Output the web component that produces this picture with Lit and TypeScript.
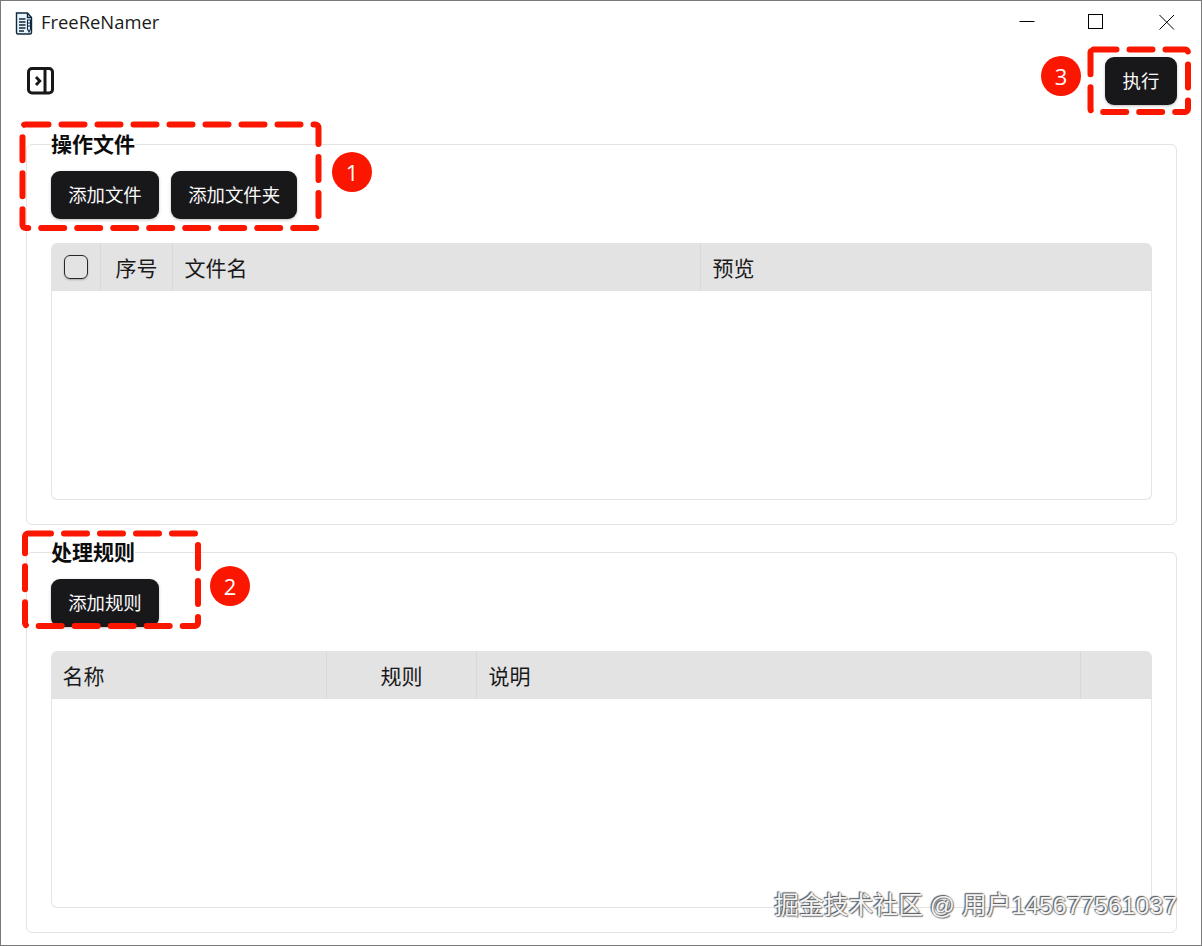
import { LitElement, html, css, svg } from "lit";
import { customElement } from "lit/decorators.js";

@customElement("app-root")
export class AppRoot extends LitElement {
  static styles = css`
    :host {
      display: block;
      position: relative;
      width: 1202px;
      height: 946px;
      box-sizing: border-box;
      border: 1px solid #7a7a7a;
      background: #fff;
      overflow: hidden;
      font-family: "Noto Sans CJK SC", "Noto Sans", sans-serif;
      color: #111;
    }
    .titlebar {
      height: 43px;
      display: flex;
      align-items: center;
      padding-left: 13px;
    }
    .app-name {
      font-family: "Open Sans", "Noto Sans", sans-serif;
      font-size: 18.4px;
      margin-left: 7px;
      color: #1a1a1a;
      position: relative;
      top: -1px;
    }
    .win {
      margin-left: auto;
      display: flex;
      padding-right: 26px;
      gap: 53px;
      position: relative;
      top: -1px;
    }
    .win svg { display: block; width: 16px; height: 16px; }
    .win svg:last-child { margin-left: 2px; }
    .toolbar {
      height: 48px;
      margin-top: 13px;
      display: flex;
      align-items: center;
      justify-content: space-between;
      padding: 0 24px 0 26px;
    }
    .toolbar svg { display: block; }
    .btn {
      height: 48px;
      min-width: 72px;
      box-sizing: border-box;
      padding: 0 17.2px 2px;
      display: inline-flex;
      align-items: center;
      justify-content: center;
      background: #18181b;
      color: #fafafa;
      border-radius: 9px;
      font-size: 18.4px;
      box-shadow: 0 1px 3px rgba(0, 0, 0, 0.25);
    }
    .card {
      margin: 0 24px 0 25px;
      height: 381px;
      box-sizing: border-box;
      border: 1px solid #e4e4e4;
      border-radius: 6px;
      padding: 0 24px;
    }
    .first { margin-top: 39px; }
    .second { margin-top: 27px; }
    .card-title {
      width: fit-content;
      height: 28px;
      line-height: 28px;
      margin-top: -16px;
      font-size: 21px;
      font-weight: 700;
      background: #fff;
      color: #0d0d0d;
    }
    .actions {
      display: flex;
      gap: 12px;
      margin-top: 14px;
    }
    .table {
      margin-top: 24px;
      height: 257px;
      box-sizing: border-box;
      border: 1px solid #e4e4e4;
      border-top: none;
      border-radius: 6px;
      overflow: hidden;
    }
    .head {
      height: 48px;
      display: grid;
      background: #e3e3e3;
      margin: 0 -1px;
      font-size: 21px;
      color: #1a1a1a;
    }
    .files { grid-template-columns: 50px 72px 528px 1fr; }
    .rules { grid-template-columns: 276px 150px 604px 1fr; }
    .cell {
      display: flex;
      align-items: center;
      padding: 0 11.5px;
      min-width: 0;
      border-right: 1px solid #d8d8d8;
    }
    .cell:last-child { border-right: none; }
    .center { justify-content: center; padding: 0; }
    .check {
      width: 24px;
      height: 24px;
      box-sizing: border-box;
      border: 1px solid #27272a;
      border-radius: 6px;
      box-shadow: 0 1px 2px rgba(0, 0, 0, 0.25);
    }
    .overlay {
      position: absolute;
      left: -1px;
      top: -1px;
      width: 1202px;
      height: 946px;
      pointer-events: none;
    }
    .badge {
      position: absolute;
      width: 40px;
      height: 40px;
      border-radius: 50%;
      background: #fb1600;
      color: #fff;
      font-size: 22px;
      font-family: "Open Sans", "Noto Sans", sans-serif;
      display: flex;
      align-items: center;
      justify-content: center;
    }
    .b1 { left: 331px; top: 151px; }
    .b2 { left: 209px; top: 565px; }
    .b3 { left: 1040px; top: 55px; }
    .mark {
      position: absolute;
      right: 24px;
      top: 887px;
      font-size: 24.8px;
      line-height: 36px;
      white-space: nowrap;
      font-family: "Liberation Sans", "Noto Sans CJK SC", sans-serif;
      color: #f4f4f4;
      text-shadow: -1px -1px 1px #555, 1px 1px 1px #777, 0 0 2px #777;
    }
  `;

  private dashed(x: number, y: number, w: number, h: number) {
    return svg`<rect x=${x} y=${y} width=${w} height=${h} rx="3" fill="none" stroke="#fb1600"
      stroke-width="6" stroke-linecap="round" stroke-linejoin="round" stroke-dasharray="23 13"></rect>`;
  }

  render() {
    return html`
      <div class="titlebar">
        <svg width="20" height="24" viewBox="0 0 20 24" fill="none" stroke="#10293f" stroke-width="1.4">
          <path d="M2.5 2 h11 l4 4.5 v15 a1.5 1.5 0 0 1 -1.5 1.5 h-12 a1.5 1.5 0 0 1 -1.5 -1.5 z" fill="#e8f3fa"></path>
          <path d="M13.5 2 v4.5 h4"></path>
          <path d="M5 8h6.5M5 11h6.5M5 14h6.5M5 17h6.5M5 20h5" stroke-width="1.5"></path>
          <path d="M13.5 9h3v9l-1.5 3l-1.5-3z" stroke-width="1.1"></path>
          <path d="M13.5 12h3M13.5 15h3" stroke-width="1"></path>
        </svg>
        <span class="app-name">FreeReNamer</span>
        <div class="win">
          <svg viewBox="0 0 16 16" fill="none" stroke="#000" stroke-width="1"><path d="M0.5 7.5h15"></path></svg>
          <svg viewBox="0 0 16 16" fill="none" stroke="#000" stroke-width="1"><rect x="0.5" y="0.5" width="14" height="14"></rect></svg>
          <svg viewBox="0 0 16 16" fill="none" stroke="#000" stroke-width="1"><path d="M0.5 1l14.5 14.5M15 1l-14.5 14.5"></path></svg>
        </div>
      </div>
      <div class="toolbar">
        <svg width="28" height="28" viewBox="0 0 28 28" fill="none" stroke="#18181b" stroke-width="3">
          <rect x="1.5" y="1.5" width="24" height="24.5" rx="3.5"></rect>
          <path d="M18 1.5v24.5"></path>
          <path d="M9 10l3.8 4l-3.8 4" stroke-width="2.8"></path>
        </svg>
        <div class="btn">执行</div>
      </div>

      <section class="card first">
        <div class="card-title">操作文件</div>
        <div class="actions">
          <div class="btn">添加文件</div>
          <div class="btn">添加文件夹</div>
        </div>
        <div class="table">
          <div class="head files">
            <div class="cell center"><div class="check"></div></div>
            <div class="cell center">序号</div>
            <div class="cell">文件名</div>
            <div class="cell">预览</div>
          </div>
        </div>
      </section>

      <section class="card second">
        <div class="card-title">处理规则</div>
        <div class="actions"><div class="btn">添加规则</div></div>
        <div class="table">
          <div class="head rules">
            <div class="cell">名称</div>
            <div class="cell center">规则</div>
            <div class="cell">说明</div>
            <div class="cell"></div>
          </div>
        </div>
      </section>

      <svg class="overlay" viewBox="0 0 1202 946">
        ${this.dashed(22.5, 124.5, 296, 103.5)}
        ${this.dashed(25, 533.5, 173, 92.5)}
        ${this.dashed(1090.5, 49.5, 97.5, 62.5)}
      </svg>
      <div class="badge b1">1</div>
      <div class="badge b2">2</div>
      <div class="badge b3">3</div>
      <div class="mark">掘金技术社区 @ 用户145677561037</div>
    `;
  }
}
